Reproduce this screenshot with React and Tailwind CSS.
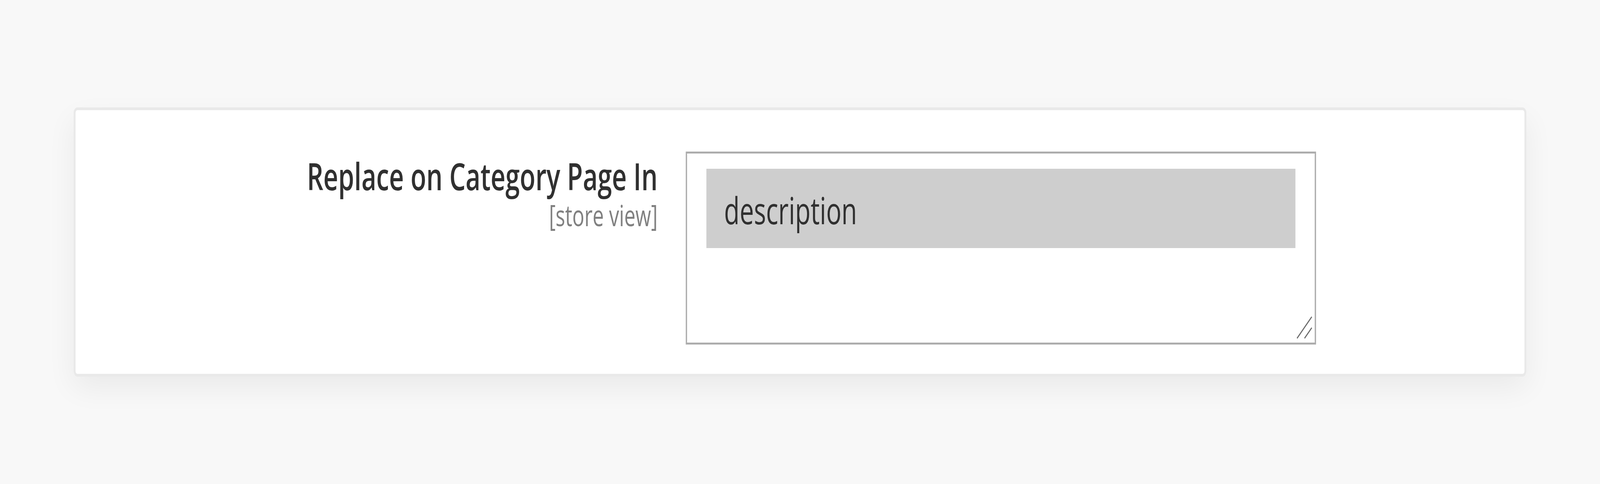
import { useLayoutEffect, useState } from "react";

export default function App() {
  const [scale, setScale] = useState({ x: 1, y: 1 });

  useLayoutEffect(() => {
    const update = () =>
      setScale({ x: window.innerWidth / 5973, y: window.innerHeight / 1239 });
    update();
    window.addEventListener("resize", update);
    return () => window.removeEventListener("resize", update);
  }, []);

  return (
    <div className="w-screen h-screen overflow-hidden bg-[#f8f8f8]">
      <div
        className="w-[5973px] h-[1239px] origin-top-left bg-[#f8f8f8] p-[275px]"
        style={{
          fontFamily: '"Open Sans", "Noto Sans", sans-serif',
          transform: `scale(${scale.x}, ${scale.y})`,
        }}
      >
        <div className="rounded-[14px] border-[7px] border-[#e9e9e9] bg-white shadow-[0_30px_90px_rgba(0,0,0,0.06)]">
          <div className="flex flex-row pt-[106px] pb-[75px]">
            <div className="w-[2173px] shrink-0 text-right">
              <div className="text-[96px] leading-[124px] font-semibold text-[#303030]">
                Replace on Category Page In
              </div>
              <div className="text-[75px] leading-[76px] text-[#808080]">[store view]</div>
            </div>
            <div className="ml-[105px] relative w-[2353px] h-[494px] shrink-0 border-[5px] border-[#adadad] bg-white">
              <div className="mt-[39px] mx-[72px] h-[203px] bg-[#cecece] pl-[66px] pt-[38px]">
                <div className="text-[95px] leading-[134px] text-[#303030]">description</div>
              </div>
              <svg
                className="absolute right-[8px] bottom-[8px]"
                width="60"
                height="60"
                viewBox="0 0 60 60"
              >
                <line x1="2" y1="57" x2="57" y2="2" stroke="#6b6b6b" strokeWidth="3.5" />
                <line x1="30" y1="57" x2="57" y2="30" stroke="#6b6b6b" strokeWidth="3.5" />
              </svg>
            </div>
          </div>
        </div>
      </div>
    </div>
  );
}
